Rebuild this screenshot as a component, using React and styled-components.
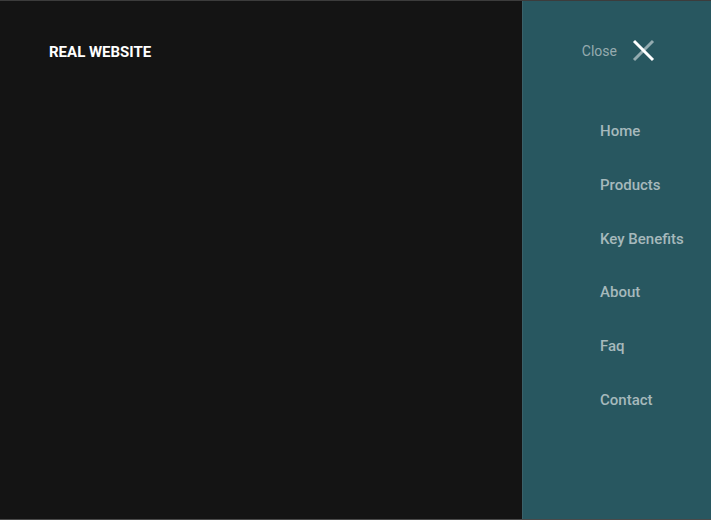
import React from "react";
import styled, { createGlobalStyle } from "styled-components";

const Global = createGlobalStyle`
  html, body { margin: 0; padding: 0; background: #141414; }
  body { font-family: Roboto, "Liberation Sans", sans-serif; }
`;

const Page = styled.div`
  display: flex;
  width: 711px;
  height: 520px;
  box-sizing: border-box;
  border-top: 1px solid #3c3c3c;
  border-bottom: 1px solid #4a4a4a;
  background: #141414;
  overflow: hidden;
`;

const Main = styled.main`
  flex: 1;
  padding: 41px 0 0 49px;
`;

const Logo = styled.div`
  font-family: Roboto, "Liberation Sans", sans-serif;
  font-weight: 700;
  font-size: 15px;
  line-height: 20px;
  color: #ffffff;
`;

const Aside = styled.aside`
  width: 188px;
  flex-shrink: 0;
  background: #285760;
  border-left: 1px solid #3a6169;
  display: flex;
  flex-direction: column;
`;

const Header = styled.div`
  display: flex;
  justify-content: flex-end;
  align-items: center;
  gap: 15px;
  height: 40px;
  padding: 29px 56px 0 0;
`;

const CloseLabel = styled.span`
  font-size: 14px;
  line-height: 16px;
  padding-top: 1px;
  color: #96abaf;
`;

const CloseButton = styled.button`
  border: 0;
  background: none;
  padding: 0;
  display: flex;
  cursor: pointer;
`;

const Nav = styled.nav`
  display: flex;
  flex-direction: column;
  gap: 33.8px;
  padding: 51px 0 0 77px;
`;

const NavLink = styled.a`
  font-size: 15px;
  line-height: 20px;
  font-weight: 500;
  color: #a6b9bc;
  text-decoration: none;
`;

const items = ["Home", "Products", "Key Benefits", "About", "Faq", "Contact"];

export default function App() {
  return (
    <>
      <Global />
      <Page>
        <Main>
          <Logo>REAL WEBSITE</Logo>
        </Main>
        <Aside>
          <Header>
            <CloseLabel>Close</CloseLabel>
            <CloseButton aria-label="Close">
              <svg width="23" height="23" viewBox="0 0 23 23">
                <line x1="2" y1="21" x2="21" y2="2" stroke="rgba(255,255,255,0.5)" strokeWidth="3" />
                <line x1="2" y1="2" x2="21" y2="21" stroke="#ffffff" strokeWidth="3" />
              </svg>
            </CloseButton>
          </Header>
          <Nav>
            {items.map((t) => (
              <NavLink key={t} href="#">{t}</NavLink>
            ))}
          </Nav>
        </Aside>
      </Page>
    </>
  );
}
